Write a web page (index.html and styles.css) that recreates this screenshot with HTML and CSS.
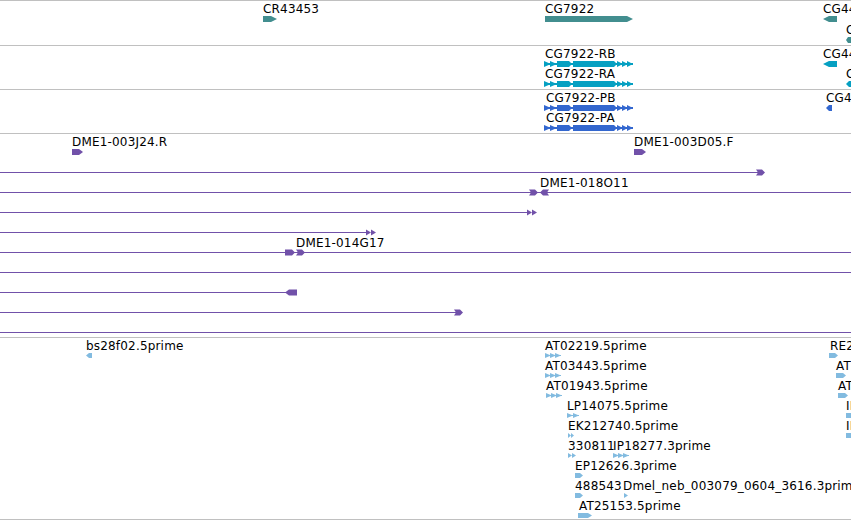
FILE: index.html
```html
<!DOCTYPE html>
<html lang="en">
<head>
    <meta charset="UTF-8">
    <title>Genome browser tracks</title>
    <link rel="stylesheet" href="styles.css">
</head>
<body>
    <div class="browser">
        <!-- genes -->
        <div class="track track-genes">
            <svg class="track-svg" width="851" height="44" viewBox="0 1 851 44">
                <g class="teal">
                    <polygon points="263,16 271,16 277,19 271,22 263,22"/>
                    <polygon points="545,16 627,16 633,19 627,22 545,22"/>
                    <polygon points="823,19 829,16 837,16 837,22 829,22"/>
                    <polygon points="846,40 848,37 860,37 860,43 848,43"/>
                </g>
                <g class="lbl">
                    <text x="263" y="13">CR43453</text>
                    <text x="545" y="13">CG7922</text>
                    <text x="823" y="13">CG4467</text>
                    <text x="846" y="34">CG4461</text>
                </g>
            </svg>
        </div>

        <!-- transcripts -->
        <div class="track track-short">
            <svg class="track-svg" width="851" height="43" viewBox="0 46 851 43">
                <defs>
                    <g id="tx">
                        <rect x="0" y="2" width="88" height="2"/>
                        <polygon points="-1,0 6,3 -1,6"/>
                        <polygon points="5,0 12,3 5,6"/>
                        <polygon points="12,0 24,0 27,3 24,6 12,6"/>
                        <polygon points="28,0 69,0 72,3 69,6 28,6"/>
                        <polygon points="72,0 78,3 72,6"/>
                        <polygon points="77,0 83,3 77,6"/>
                        <polygon points="82,0 88,3 82,6"/>
                    </g>
                    <g id="rr"><polygon points="0,-3 6,-3 9,0 6,3 0,3 2,0"/></g>
                    <g id="rl"><polygon points="0,0 3,-3 9,-3 7,0 9,3 3,3"/></g>
                    <g id="dbl">
                        <polygon points="0,-3 5,0 0,3"/>
                        <polygon points="5,-3 10,0 5,3"/>
                    </g>
                    <g id="tri">
                        <rect x="0" y="2" width="16" height="1"/>
                        <polygon points="0,0 6,2.5 0,5"/>
                        <polygon points="5,0 11,2.5 5,5"/>
                        <polygon points="10,0 16,2.5 10,5"/>
                    </g>
                    <g id="two">
                        <rect x="0" y="2" width="12" height="1"/>
                        <polygon points="0,0 6,2.5 0,5"/>
                        <polygon points="6,0 12,2.5 6,5"/>
                    </g>
                </defs>
                <g class="cyan">
                    <use href="#tx" x="545" y="61"/>
                    <use href="#tx" x="545" y="81"/>
                    <polygon points="823,64 829,61 837,61 837,67 829,67"/>
                    <polygon points="846,84 849,81 860,81 860,87 849,87"/>
                </g>
                <g class="lbl">
                    <text x="545" y="58">CG7922-RB</text>
                    <text x="545" y="78">CG7922-RA</text>
                    <text x="823" y="58">CG4467-RA</text>
                    <text x="846" y="78">CG4461-RA</text>
                </g>
            </svg>
        </div>

        <!-- proteins -->
        <div class="track track-short">
            <svg class="track-svg" width="851" height="43" viewBox="0 90 851 43">
                <g class="blue">
                    <use href="#tx" x="545" y="105"/>
                    <use href="#tx" x="545" y="125"/>
                    <polygon points="826,108 829,105 832,105 832,111 829,111"/>
                </g>
                <g class="lbl">
                    <text x="546" y="102">CG7922-PB</text>
                    <text x="546" y="122">CG7922-PA</text>
                    <text x="826" y="102">CG4467-PA</text>
                </g>
            </svg>
        </div>

        <!-- BAC ends -->
        <div class="track track-bac">
            <svg class="track-svg" width="851" height="203" viewBox="0 134 851 203">
                <g class="purple">
                    <polygon points="72,149 79,149 83,152 79,155 72,155"/>
                    <polygon points="634,149 642,149 646,152 642,155 634,155"/>

                    <rect x="0" y="172" width="760" height="1"/>
                    <use href="#rr" x="756" y="172.5"/>

                    <rect x="0" y="192" width="851" height="1"/>
                    <use href="#rr" x="529" y="192.5"/>
                    <use href="#rl" x="540" y="192.5"/>

                    <rect x="0" y="212" width="530" height="1"/>
                    <use href="#dbl" x="527" y="212.5"/>

                    <rect x="0" y="232" width="368" height="1"/>
                    <use href="#dbl" x="366" y="232.5"/>

                    <rect x="0" y="252" width="851" height="1"/>
                    <polygon points="285,249.5 292,249.5 295,252.5 292,255.5 285,255.5"/>
                    <use href="#rr" x="296" y="252.5"/>

                    <rect x="0" y="272" width="851" height="1"/>

                    <rect x="0" y="292" width="290" height="1"/>
                    <polygon points="285,292.5 289,289.5 297,289.5 297,295.5 289,295.5"/>

                    <rect x="0" y="312" width="456" height="1"/>
                    <use href="#rr" x="454" y="312.5"/>

                    <rect x="0" y="332" width="851" height="1"/>
                </g>
                <g class="lbl">
                    <text x="72" y="146">DME1-003J24.R</text>
                    <text x="634" y="146">DME1-003D05.F</text>
                    <text x="540" y="187">DME1-018O11</text>
                    <text x="296" y="247">DME1-014G17</text>
                </g>
            </svg>
        </div>

        <!-- ESTs -->
        <div class="track track-est">
            <svg class="track-svg" width="851" height="181" viewBox="0 338 851 181">
                <g class="light">
                    <polygon points="86,355.5 89,353 92,353 92,358 89,358"/>
                    <use href="#tri" x="545" y="353"/>
                    <use href="#tri" x="545" y="373"/>
                    <use href="#tri" x="546" y="393"/>
                    <use href="#two" x="567" y="413"/>
                    <polygon points="568,433 571,435.5 568,438"/>
                    <polygon points="571,433 574,435.5 571,438"/>
                    <polygon points="568,453 572,455.5 568,458"/>
                    <polygon points="572,453 576,455.5 572,458"/>
                    <use href="#tri" x="613" y="453"/>
                    <polygon points="575,473 580,473 583,475.5 580,478 575,478"/>
                    <polygon points="575,493 580,493 583,495.5 580,498 575,498"/>
                    <polygon points="624,493 628,495.5 624,498"/>
                    <polygon points="578,513 588,513 592,515.5 588,518 578,518"/>

                    <polygon points="829,353 835,353 838,355.5 835,358 829,358"/>
                    <polygon points="836,373 843,373 846,375.5 843,378 836,378"/>
                    <polygon points="838,393 845,393 848,395.5 845,398 838,398"/>
                    <polygon points="846,413 853,413 856,415.5 853,418 846,418"/>
                    <polygon points="846,433 853,433 856,435.5 853,438 846,438"/>
                </g>
                <g class="lbl">
                    <text x="86" y="350">bs28f02.5prime</text>
                    <text x="545" y="350">AT02219.5prime</text>
                    <text x="545" y="370">AT03443.5prime</text>
                    <text x="546" y="390">AT01943.5prime</text>
                    <text x="567" y="410">LP14075.5prime</text>
                    <text x="568" y="430">EK212740.5prime</text>
                    <text x="568" y="450">330811</text>
                    <text x="613" y="450">IP18277.3prime</text>
                    <text x="575" y="470">EP12626.3prime</text>
                    <text x="575" y="490">488543</text>
                    <text x="623" y="490">Dmel_neb_003079_0604_3616.3prime</text>
                    <text x="579" y="510">AT25153.5prime</text>
                    <text x="830" y="350">RE22137.5prime</text>
                    <text x="836" y="370">AT13502.5prime</text>
                    <text x="838" y="390">AT21420.5prime</text>
                    <text x="846" y="410">IP07411.5prime</text>
                    <text x="846" y="430">IP07412.5prime</text>
                </g>
            </svg>
        </div>
    </div>
</body>
</html>
```

FILE: styles.css
```css
body {
    margin: 0;
    padding: 0;
    background-color: #fff;
    font-family: 'DejaVu Sans', sans-serif;
}
.browser {
    width: 851px;
    overflow: hidden;
}
.track {
    border-top: 1px solid #c0c0c0;
}
.track-genes {
    height: 44px;
}
.track-short {
    height: 43px;
}
.track-bac {
    height: 203px;
}
.track-est {
    height: 181px;
    border-bottom: 1px solid #c0c0c0;
}
.track-svg {
    display: block;
    overflow: hidden;
}
.lbl text {
    font-family: 'DejaVu Sans', sans-serif;
    font-size: 12px;
    letter-spacing: 0.18px;
    fill: #000;
}
.teal {
    fill: #428e8f;
}
.cyan {
    fill: #06a0c2;
}
.blue {
    fill: #3367cf;
}
.purple {
    fill: #7151a9;
}
.light {
    fill: #82bbe0;
}
```
